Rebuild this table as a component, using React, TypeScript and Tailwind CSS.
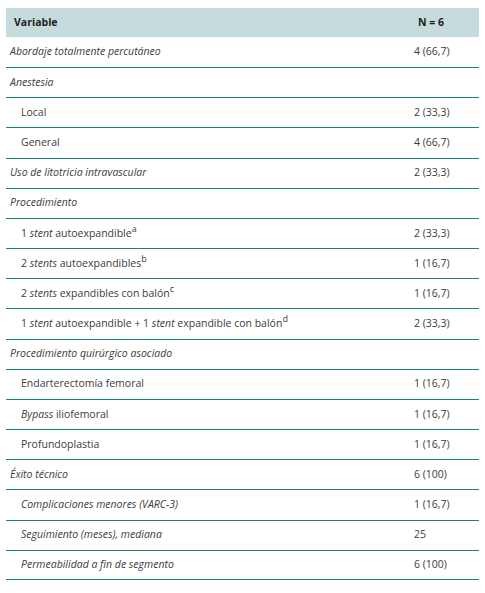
const sup = 'text-[9px] leading-none relative -top-[5px]';

const rows: { label: React.ReactNode; value?: string; indent?: boolean }[] = [
  { label: <i>Abordaje totalmente percutáneo</i>, value: '4 (66,7)' },
  { label: <i>Anestesia</i> },
  { label: 'Local', value: '2 (33,3)', indent: true },
  { label: 'General', value: '4 (66,7)', indent: true },
  { label: <i>Uso de litotricia intravascular</i>, value: '2 (33,3)' },
  { label: <i>Procedimiento</i> },
  {
    label: (
      <>
        1 <i>stent</i> autoexpandible<sup className={sup}>a</sup>
      </>
    ),
    value: '2 (33,3)',
    indent: true,
  },
  {
    label: (
      <>
        2 <i>stents</i> autoexpandibles<sup className={sup}>b</sup>
      </>
    ),
    value: '1 (16,7)',
    indent: true,
  },
  {
    label: (
      <>
        2 <i>stents</i> expandibles con balón<sup className={sup}>c</sup>
      </>
    ),
    value: '1 (16,7)',
    indent: true,
  },
  {
    label: (
      <>
        1 <i>stent</i> autoexpandible + 1 <i>stent</i> expandible con balón
        <sup className={sup}>d</sup>
      </>
    ),
    value: '2 (33,3)',
    indent: true,
  },
  { label: <i>Procedimiento quirúrgico asociado</i> },
  { label: 'Endarterectomía femoral', value: '1 (16,7)', indent: true },
  {
    label: (
      <>
        <i>Bypass</i> iliofemoral
      </>
    ),
    value: '1 (16,7)',
    indent: true,
  },
  { label: 'Profundoplastia', value: '1 (16,7)', indent: true },
  { label: <i>Éxito técnico</i>, value: '6 (100)' },
  { label: <i>Complicaciones menores (VARC-3)</i>, value: '1 (16,7)', indent: true },
  { label: <i>Seguimiento (meses), mediana</i>, value: '25', indent: true },
  { label: <i>Permeabilidad a fin de segmento</i>, value: '6 (100)', indent: true },
];

export default function App() {
  return (
    <div className="w-[485px] h-[593px] bg-white pt-2 px-[6px] text-[10.5px] text-[#3c3c3c] font-['Open_Sans',sans-serif]">
      <div className="w-[473px]">
        {/* Header */}
        <div className="flex items-center h-[29px] bg-[#c6dbdc] font-bold text-[#1e1e1e]">
          <span className="pl-2 flex-1">Variable</span>
          <span className="w-[65px] pl-[4px]">N = 6</span>
        </div>

        {rows.map((r, i) => (
          <div
            key={i}
            className={`flex items-center h-[30.17px] ${i === 0 ? '' : 'border-t'} border-[#16827b] ${
              i === rows.length - 1 ? 'border-b' : ''
            }`}
          >
            <span className={`flex-1 ${r.indent ? 'pl-[15px]' : 'pl-[4px]'}`}>{r.label}</span>
            <span className="w-[65px]">{r.value}</span>
          </div>
        ))}
      </div>
    </div>
  );
}
